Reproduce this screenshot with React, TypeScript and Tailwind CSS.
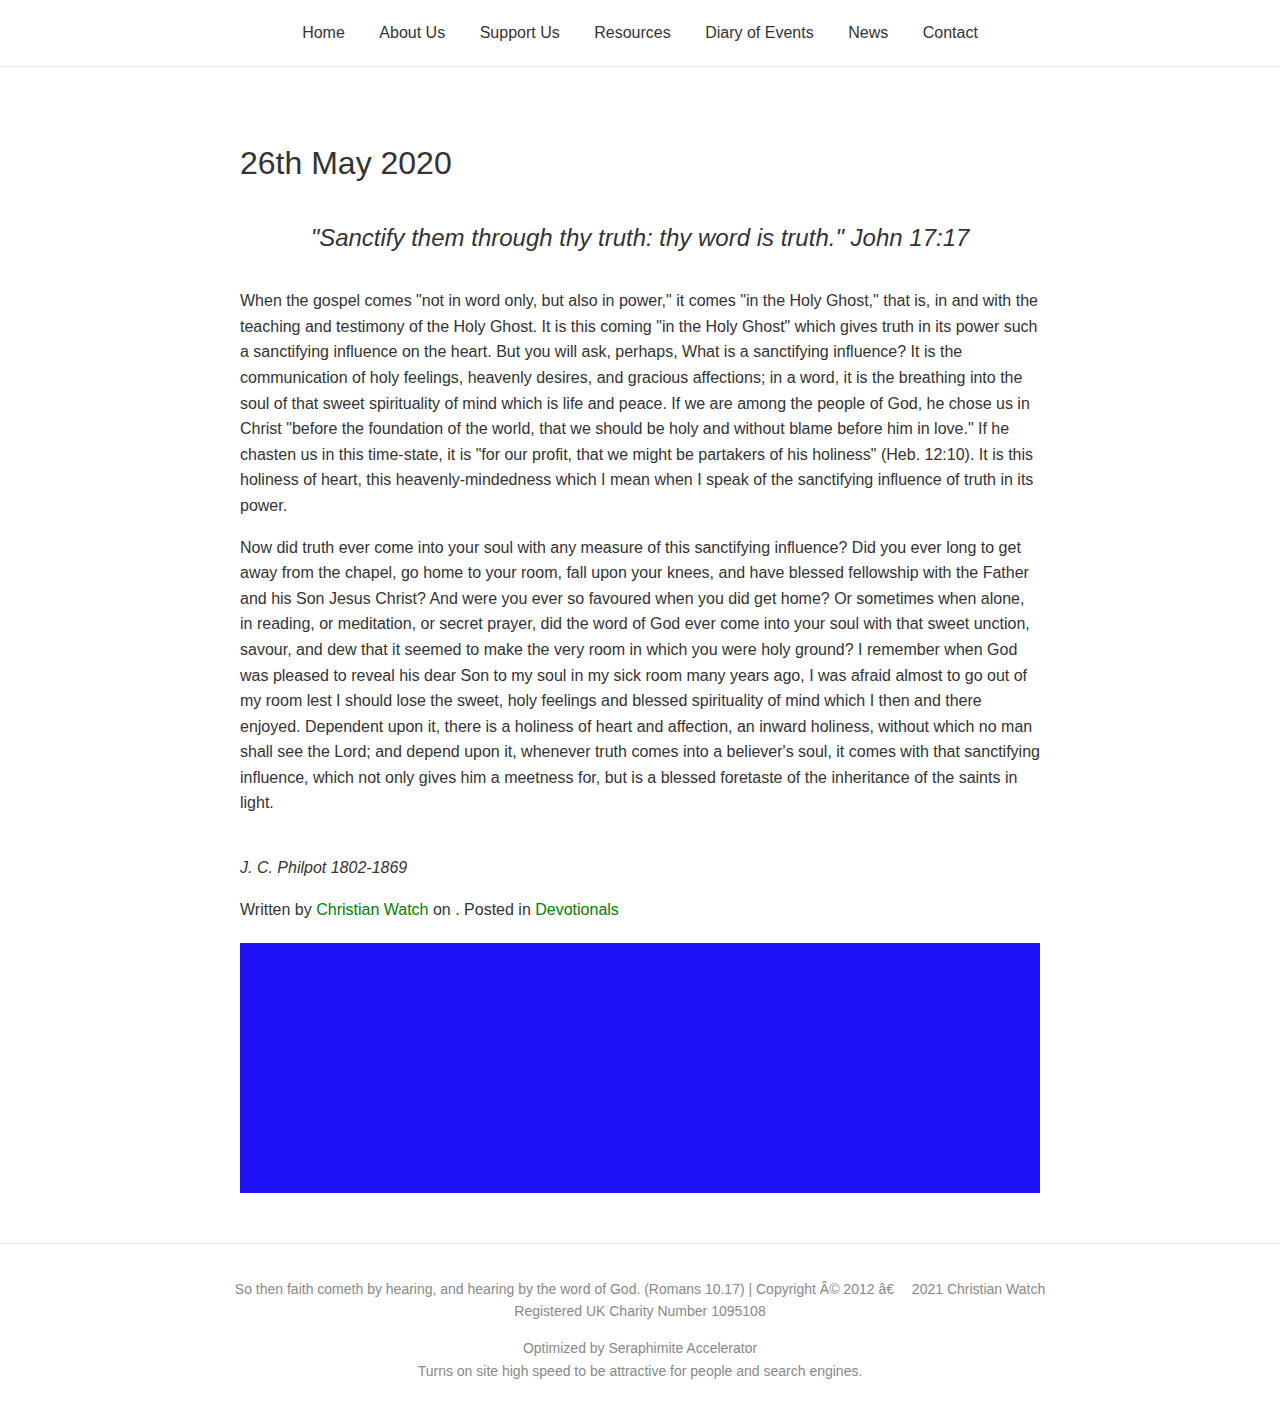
const navItems = ['Home', 'About Us', 'Support Us', 'Resources', 'Diary of Events', 'News', 'Contact'];

export default function App() {
  return (
    <div className="min-h-[1417px] bg-white font-['Liberation_Sans',Arial,sans-serif] text-[#333]">
      <header className="h-[67px] border-b border-[#e5e5e5]">
        <nav className="flex h-[66px] items-center justify-center">
          <ul className="flex gap-[34.5px] text-[16px]">
            {navItems.map((item) => (
              <li key={item}>
                <a href="#" className="text-[#333]">
                  {item}
                </a>
              </li>
            ))}
          </ul>
        </nav>
      </header>

      <main className="mx-auto w-[800px] pt-[77px] pb-[50px]">
        <h1 className="text-[32px] leading-[1.2] font-normal">26th May 2020</h1>

        <p className="mt-[42px] text-center text-[24px] leading-[1.2] italic">
          "Sanctify them through thy truth: thy word is truth." John 17:17
        </p>

        <div className="mt-[35px] text-[16px] leading-[1.6]">
          <p>
            When the gospel comes "not in word only, but also in power," it comes "in the Holy Ghost," that is, in and
            with the teaching and testimony of the Holy Ghost. It is this coming "in the Holy Ghost" which gives truth in
            its power such a sanctifying influence on the heart. But you will ask, perhaps, What is a sanctifying
            influence? It is the communication of holy feelings, heavenly desires, and gracious affections; in a word, it
            is the breathing into the soul of that sweet spirituality of mind which is life and peace. If we are among the
            people of God, he chose us in Christ "before the foundation of the world, that we should be holy and without
            blame before him in love." If he chasten us in this time-state, it is "for our profit, that we might be
            partakers of his holiness" (Heb. 12:10). It is this holiness of heart, this heavenly-mindedness which I mean
            when I speak of the sanctifying influence of truth in its power.
          </p>
          <p className="mt-4">
            Now did truth ever come into your soul with any measure of this sanctifying influence? Did you ever long to
            get away from the chapel, go home to your room, fall upon your knees, and have blessed fellowship with the
            Father and his Son Jesus Christ? And were you ever so favoured when you did get home? Or sometimes when alone,
            in reading, or meditation, or secret prayer, did the word of God ever come into your soul with that sweet
            unction, savour, and dew that it seemed to make the very room in which you were holy ground? I remember when
            God was pleased to reveal his dear Son to my soul in my sick room many years ago, I was afraid almost to go
            out of my room lest I should lose the sweet, holy feelings and blessed spirituality of mind which I then and
            there enjoyed. Dependent upon it, there is a holiness of heart and affection, an inward holiness, without
            which no man shall see the Lord; and depend upon it, whenever truth comes into a believer's soul, it comes
            with that sanctifying influence, which not only gives him a meetness for, but is a blessed foretaste of the
            inheritance of the saints in light.
          </p>
          <p className="mt-[39px] italic">J. C. Philpot 1802-1869</p>
          <p className="mt-4">
            Written by{' '}
            <a href="#" className="text-[#008000]">
              Christian Watch
            </a>{' '}
            on . Posted in{' '}
            <a href="#" className="text-[#008000]">
              Devotionals
            </a>
          </p>
        </div>

        <div className="mt-[21px] h-[250px] w-full bg-[#1f12f9]" />
      </main>

      <footer className="border-t border-[#e5e5e5] pt-[34px] pb-[35px] text-center text-[14px] leading-[22px] text-[#888]">
        <p>
          So then faith cometh by hearing, and hearing by the word of God. (Romans 10.17) | Copyright Â© 2012 â€
          {'\u2003 '}2021 Christian Watch
        </p>
        <p>Registered UK Charity Number 1095108</p>
        <div className="mt-[15px] leading-[23px]">
          <p>Optimized by Seraphimite Accelerator</p>
          <p>Turns on site high speed to be attractive for people and search engines.</p>
        </div>
      </footer>
    </div>
  );
}
